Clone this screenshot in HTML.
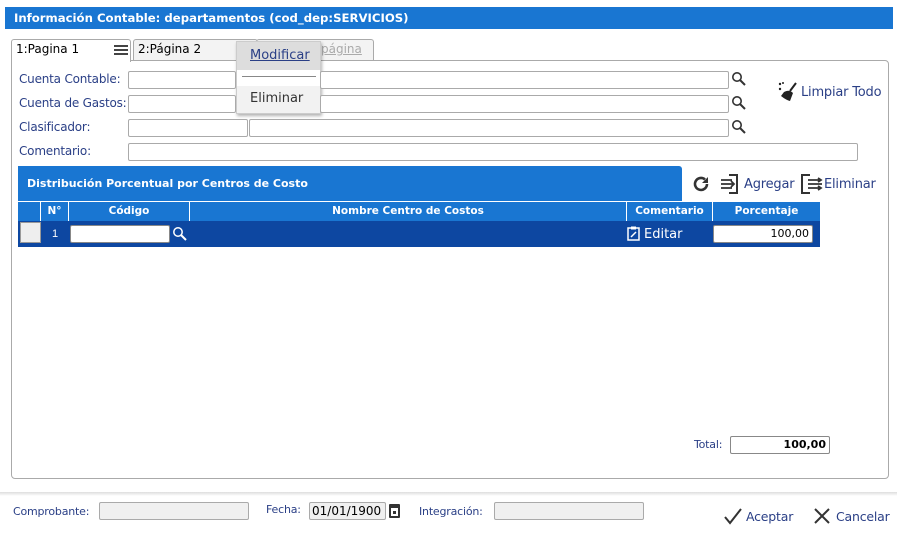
<!DOCTYPE html>
<html><head><meta charset="utf-8"><style>
*{box-sizing:border-box}
body{margin:0;width:897px;height:535px;background:#fff;font-family:"Liberation Sans","DejaVu Sans",sans-serif;position:relative;overflow:hidden}
.a{position:absolute}
.lbl{position:absolute;font-size:12px;color:#2a3f86;font-family:"DejaVu Sans",sans-serif;letter-spacing:-0.2px}
.inp{position:absolute;border:1px solid #aaa;border-radius:2px;background:#fff;height:18px}
.mag{position:absolute;width:16px;height:16px}
.th{position:absolute;top:202px;height:19px;color:#fff;font-size:10.5px;font-weight:bold;text-align:center;line-height:19px;border-right:1px solid #fff;font-family:"DejaVu Sans",sans-serif}
</style></head><body>
<div class="a" style="left:5px;top:7px;width:888px;height:22px;background:#1976d2;color:#fff;font-weight:bold;font-size:11.7px;line-height:22px;padding-left:9px;font-family:'DejaVu Sans',sans-serif">Información Contable: departamentos (cod_dep:SERVICIOS)</div>

<div class="a" style="left:11px;top:60px;width:878px;height:419px;border:1px solid #aaa;border-radius:0 4px 4px 4px"></div>
<div class="a" style="left:11px;top:39px;width:120px;height:23px;border:1px solid #aaa;border-bottom:none;background:#fff;border-radius:3px 3px 0 0;font-size:12px;padding:2px 4px;font-family:'DejaVu Sans',sans-serif">1:Pagina 1</div>
<div class="a" style="left:114px;top:45px;width:14px;height:2px;background:#444;box-shadow:0 4px 0 #444,0 8px 0 #444"></div>
<div class="a" style="left:133px;top:39px;width:125px;height:21px;border:1px solid #aaa;border-bottom:none;background:#f3f3f3;border-radius:3px 3px 0 0;font-size:12px;padding:2px 4px;font-family:'DejaVu Sans',sans-serif">2:Página 2</div>
<div class="a" style="left:256px;top:39px;width:118px;height:21px;border:1px solid #aaa;border-bottom:none;background:#f3f3f3;border-radius:3px 3px 0 0;font-size:12px;padding:2px 4px 2px 64px;color:#aaa;text-decoration:underline;font-family:'DejaVu Sans',sans-serif">página</div>
<div class="a" style="left:236px;top:41px;width:85px;height:73px;background:#f2f2f2;border:1px solid #ccc;box-shadow:1px 2px 3px rgba(0,0,0,.3);font-size:13px;font-family:'DejaVu Sans',sans-serif">
<div style="background:#ddd;height:28px;line-height:28px;padding-left:13px;color:#2a3f86;text-decoration:underline">Modificar</div>
<div style="background:#fff;height:16px;position:relative"><div class="a" style="left:5px;top:6px;width:74px;border-top:1px solid #888"></div></div>
<div style="height:28px;line-height:26px;padding-left:13px;color:#333">Eliminar</div>
</div>

<div class="lbl" style="left:19px;top:72px">Cuenta Contable:</div>
<div class="lbl" style="left:19px;top:96px">Cuenta de Gastos:</div>
<div class="lbl" style="left:19px;top:120px">Clasificador:</div>
<div class="lbl" style="left:19px;top:144px">Comentario:</div>
<div class="inp" style="left:128px;top:71px;width:108px"></div><div class="inp" style="left:320px;top:71px;width:409px"></div>
<div class="inp" style="left:128px;top:95px;width:108px"></div><div class="inp" style="left:320px;top:95px;width:409px"></div>
<div class="inp" style="left:128px;top:119px;width:120px"></div><div class="inp" style="left:249px;top:119px;width:480px"></div>
<div class="inp" style="left:128px;top:143px;width:730px"></div>
<svg class="mag" style="left:731px;top:71px" viewBox="0 0 16 16"><circle cx="6" cy="6" r="4.2" fill="none" stroke="#333" stroke-width="1.6"/><path d="M9 9l5 5" stroke="#333" stroke-width="2"/></svg>
<svg class="mag" style="left:731px;top:95px" viewBox="0 0 16 16"><circle cx="6" cy="6" r="4.2" fill="none" stroke="#333" stroke-width="1.6"/><path d="M9 9l5 5" stroke="#333" stroke-width="2"/></svg>
<svg class="mag" style="left:731px;top:119px" viewBox="0 0 16 16"><circle cx="6" cy="6" r="4.2" fill="none" stroke="#333" stroke-width="1.6"/><path d="M9 9l5 5" stroke="#333" stroke-width="2"/></svg>

<svg class="a" style="left:777px;top:81px" width="22" height="22" viewBox="0 0 22 22"><circle cx="3" cy="3" r="1.2" fill="#222"/><circle cx="6" cy="2" r="1" fill="#222"/><circle cx="3" cy="8" r="1.2" fill="#222"/><path d="M19 2L13 10" stroke="#222" stroke-width="2"/><path d="M7 11q5-3 9 1l-3 8q-4-1-9-5z" fill="#222"/></svg>
<div class="lbl" style="left:801px;top:85px;font-size:13px">Limpiar Todo</div>

<div class="a" style="left:18px;top:166px;width:664px;height:35px;background:#1976d2;border-radius:0 3px 0 0;color:#fff;font-weight:bold;font-size:11px;line-height:36px;padding-left:9px;font-family:'DejaVu Sans',sans-serif">Distribución Porcentual por Centros de Costo</div>
<svg class="a" style="left:691px;top:174px" width="20" height="20" viewBox="0 0 20 20"><path d="M16 10a6 6 0 1 1-2-4.5" fill="none" stroke="#333" stroke-width="2.6"/><path d="M17 3v6h-6z" fill="#333"/></svg>
<svg class="a" style="left:719px;top:173px" width="22" height="22" viewBox="0 0 22 22"><path d="M10 2h8v18h-8" fill="none" stroke="#333" stroke-width="2"/><path d="M2 7h11M2 11h13M2 15h11M12 8l3 3-3 3" fill="none" stroke="#333" stroke-width="1.8"/></svg>
<div class="lbl" style="left:744px;top:177px;font-size:13px">Agregar</div>
<svg class="a" style="left:799px;top:173px" width="24" height="22" viewBox="0 0 24 22"><path d="M11 2H3v18h8" fill="none" stroke="#333" stroke-width="2"/><path d="M9 7h12M9 11h14M9 15h12M19 5l3 2-3 2M19 13l3 2-3 2" fill="none" stroke="#333" stroke-width="1.8"/></svg>
<div class="lbl" style="left:824px;top:177px;font-size:13px">Eliminar</div>

<div class="a" style="left:18px;top:202px;width:802px;height:19px;background:#1976d2"></div>
<div class="th" style="left:18px;width:23px"></div>
<div class="th" style="left:41px;width:28px">N°</div>
<div class="th" style="left:69px;width:121px">Código</div>
<div class="th" style="left:190px;width:437px">Nombre Centro de Costos</div>
<div class="th" style="left:627px;width:86px">Comentario</div>
<div class="th" style="left:713px;width:107px;border:none">Porcentaje</div>
<div class="a" style="left:18px;top:221px;width:802px;height:26px;background:#0d47a1"></div>
<div class="a" style="left:20px;top:222px;width:21px;height:21px;background:#eee;border:1px solid #999"></div>
<div class="a" style="left:52px;top:228px;color:#fff;font-size:11px">1</div>
<div class="a" style="left:70px;top:225px;width:100px;height:18px;background:#fff;border:1px solid #888;border-radius:2px"></div>
<svg class="mag" style="left:172px;top:226px" viewBox="0 0 16 16"><circle cx="6" cy="6" r="4.2" fill="none" stroke="#fff" stroke-width="1.5"/><path d="M9 9l5 5" stroke="#fff" stroke-width="2"/></svg>
<svg class="a" style="left:627px;top:226px" width="13" height="15" viewBox="0 0 13 15"><rect x="1" y="2" width="11" height="12" fill="none" stroke="#fff" stroke-width="1.5"/><rect x="4" y="0.5" width="5" height="3" fill="#fff"/><path d="M4 11l5-5" stroke="#fff" stroke-width="1.5"/></svg>
<div class="a" style="left:644px;top:227px;color:#fff;font-size:13px;font-family:'DejaVu Sans',sans-serif">Editar</div>
<div class="a" style="left:713px;top:225px;width:100px;height:18px;background:#fff;border:1px solid #888;border-radius:2px;font-size:11px;text-align:right;padding-right:3px;line-height:16px;font-family:'DejaVu Sans',sans-serif">100,00</div>

<div class="lbl" style="left:694px;top:438px;font-size:11px">Total:</div>
<div class="a" style="left:730px;top:436px;width:100px;height:18px;border:1px solid #888;border-radius:2px;font-size:11px;font-weight:bold;text-align:right;padding-right:3px;line-height:16px;font-family:'DejaVu Sans',sans-serif">100,00</div>

<div class="a" style="left:0;top:492px;width:897px;height:4px;background:linear-gradient(#ddd,#fff)"></div>
<div class="lbl" style="left:13px;top:505px;font-size:11px">Comprobante:</div>
<div class="inp" style="left:99px;top:502px;width:150px;background:#f0f0f0"></div>
<div class="lbl" style="left:266px;top:503px;font-size:11px">Fecha:</div>
<div class="inp" style="left:309px;top:502px;width:77px;background:#f0f0f0;font-size:12px;line-height:16px;padding-left:2px;font-family:'DejaVu Sans',sans-serif">01/01/1900</div>
<div class="a" style="left:389px;top:504px;width:11px;height:14px;background:#333;border-radius:1px"></div><div class="a" style="left:391px;top:508px;width:7px;height:8px;background:#fff"></div><div class="a" style="left:393px;top:511px;width:3px;height:3px;background:#333"></div>
<div class="lbl" style="left:419px;top:505px;font-size:11px">Integración:</div>
<div class="inp" style="left:494px;top:502px;width:150px;background:#f0f0f0"></div>
<svg class="a" style="left:723px;top:507px" width="20" height="18" viewBox="0 0 20 18"><path d="M2 10l5 6L18 2" fill="none" stroke="#333" stroke-width="2"/></svg>
<div class="lbl" style="left:746px;top:509px;font-size:12.5px">Aceptar</div>
<svg class="a" style="left:813px;top:507px" width="18" height="18" viewBox="0 0 18 18"><path d="M2 2l14 14M16 2L2 16" stroke="#333" stroke-width="2"/></svg>
<div class="lbl" style="left:836px;top:509px;font-size:12.5px">Cancelar</div>
</body></html>
